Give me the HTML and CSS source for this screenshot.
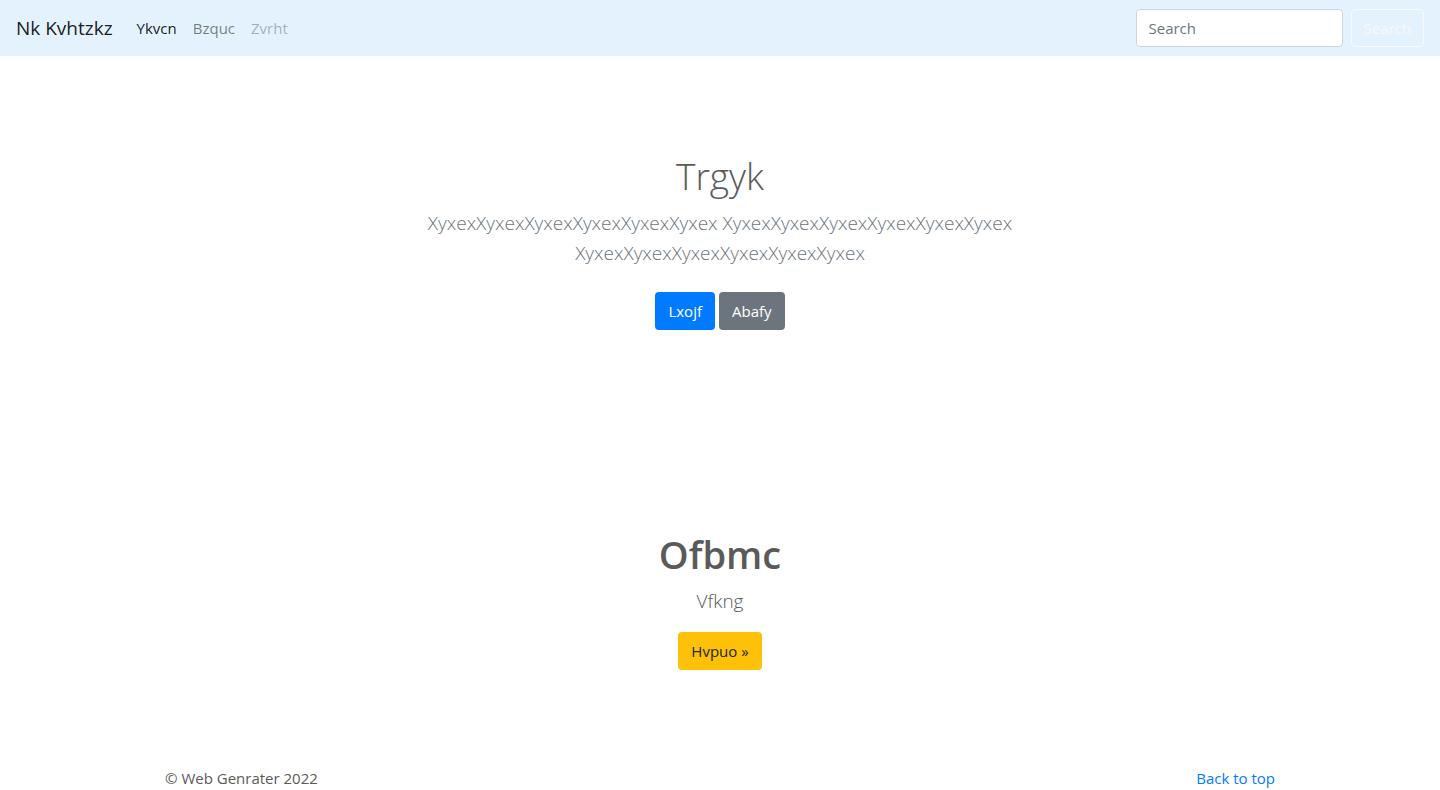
FILE: index.html
```html
<!DOCTYPE html>
<html lang="en">
<head>
<meta charset="utf-8">
<meta name="viewport" content="width=device-width, initial-scale=1">
<title>Nk Kvhtzkz</title>
<link rel="stylesheet" href="styles.css">
</head>
<body>
<header class="navbar" id="top">
  <a class="brand" href="#">Nk Kvhtzkz</a>
  <nav class="nav">
    <a class="nav-link active" href="#">Ykvcn</a>
    <a class="nav-link" href="#">Bzquc</a>
    <a class="nav-link disabled" href="#" aria-disabled="true">Zvrht</a>
  </nav>
  <form class="search">
    <input class="search-input" type="text" placeholder="Search" aria-label="Search">
    <button class="btn btn-outline" type="submit">Search</button>
  </form>
</header>
<main>
  <section class="hero">
    <h1 class="title title-light">Trgyk</h1>
    <p class="lead muted">XyxexXyxexXyxexXyxexXyxexXyxex XyxexXyxexXyxexXyxexXyxexXyxex XyxexXyxexXyxexXyxexXyxexXyxex</p>
    <div class="actions">
      <button class="btn btn-primary" type="button">Lxojf</button>
      <button class="btn btn-secondary" type="button">Abafy</button>
    </div>
  </section>
  <section class="hero">
    <h1 class="title">Ofbmc</h1>
    <p class="lead">Vfkng</p>
    <button class="btn btn-warning" type="button">Hvpuo »</button>
  </section>
</main>
<footer class="footer">
  <span>© Web Genrater 2022</span>
  <a href="#top">Back to top</a>
</footer>
</body>
</html>
```
FILE: styles.css
```css
*, *::before, *::after { box-sizing: border-box; }
body {
  margin: 0;
  background: #fff;
  color: #5a5a5a;
  font: 400 15px/24px "Open Sans", "Noto Sans", sans-serif;
}
a { color: #007bff; text-decoration: none; }
.navbar {
  display: flex;
  align-items: center;
  padding: 8px 16px;
  min-height: 56px;
  background: #e3f2fd;
}
.brand {
  margin-right: 16px;
  color: rgba(0, 0, 0, .9);
  font-size: 19px;
  line-height: 30px;
}
.nav { display: flex; }
.nav-link { padding: 8px; color: rgba(0, 0, 0, .5); }
.nav-link.active { color: rgba(0, 0, 0, .9); }
.nav-link.disabled { color: rgba(0, 0, 0, .3); }
.search { display: flex; gap: 8px; margin-left: auto; }
.search-input {
  width: 207px;
  height: 38px;
  padding: 6px 12px;
  border: 1px solid #ced4da;
  border-radius: 4px;
  background: #fff;
  color: #495057;
  font: inherit;
}
.search-input::placeholder { color: #6c757d; opacity: 1; }
.btn {
  padding: 6px 12px;
  border: 1px solid transparent;
  border-radius: 4px;
  color: #fff;
  font: inherit;
  cursor: pointer;
}
.btn-outline { border-color: #f8f9fa; background: transparent; color: #f8f9fa; }
.btn-primary { background: #007bff; }
.btn-secondary { background: #6c757d; }
.btn-warning { background: #ffc107; color: #212529; }
.hero {
  max-width: 640px;
  margin: 0 auto;
  padding: 96px 16px;
  text-align: center;
}
.title {
  margin: 0 0 8px;
  font-size: 38px;
  font-weight: 600;
  line-height: 48px;
}
.title-light { font-size: 37px; font-weight: 300; }
.lead {
  margin: 0 0 16px;
  font-size: 19px;
  font-weight: 300;
  line-height: 30px;
}
.muted { color: #6c757d; }
.actions {
  display: flex;
  justify-content: center;
  gap: 4px;
  padding: 8px 0;
}
.footer {
  display: flex;
  justify-content: space-between;
  max-width: 1140px;
  margin: 0 auto;
  padding: 0 15px;
}
```
